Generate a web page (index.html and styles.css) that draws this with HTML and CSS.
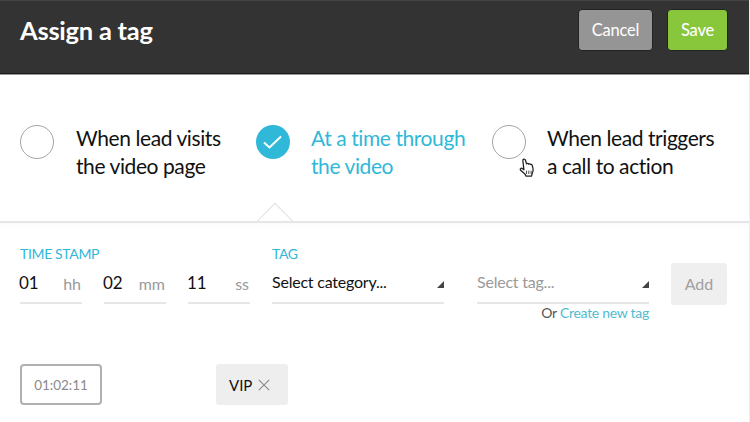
FILE: index.html
```html
<!DOCTYPE html>
<html lang="en">
<head>
<meta charset="utf-8">
<title>Assign a tag</title>
<link rel="stylesheet" href="styles.css">
</head>
<body>
<header class="top">
  <h1 class="title">Assign a tag</h1>
  <div class="actions">
    <button class="btn cancel">Cancel</button>
    <button class="btn save">Save</button>
  </div>
</header>
<section class="options">
  <div class="opt opt1">
    <span class="radio"></span>
    <span class="opt-text">When lead visits<br>the video page</span>
  </div>
  <div class="opt opt2 active">
    <svg class="check" width="34" height="34" viewBox="0 0 34 34"><circle cx="17" cy="17" r="17" fill="#30b8d8"/><path d="M8 17.5l5.500 5L25 11.500" fill="none" stroke="#fff" stroke-width="2"/></svg>
    <span class="opt-text">At a time through<br>the video</span>
  </div>
  <div class="opt opt3">
    <span class="radio"></span>
    <span class="opt-text">When lead triggers<br>a call to action</span>
    <svg class="cursor" width="18" height="20" viewBox="0 0 18 22"><path d="M5 1.500c1-.7 2 0 2.300 1l1.200 4 .6-.4c.8-.4 1.500 0 1.800.6.600-.5 1.500-.3 1.900.4.700-.4 1.500-.1 1.800.6l1 3.800c.4 1.800.1 3.500-.8 5l-.8 3.400H8l-1.300-2.400L2 13.500c-.6-.8-.5-1.600.1-2 .7-.5 1.500-.3 2.200.3l1.300 1.200L4.500 3.400c-.2-.8 0-1.500.5-1.900z" fill="#fff" stroke="#222" stroke-width="1.400" stroke-linejoin="round"/><path d="M8.500 14v3.500M11 14v3.500M13.500 14v3.500" stroke="#333" stroke-width="1"/></svg>
  </div>
</section>
<div class="divider"><span class="notch"></span></div>
<section class="form">
  <div class="col-time">
    <div class="label">TIME STAMP</div>
    <div class="time-fields">
      <div class="tf"><span class="val">01</span><span class="unit">hh</span></div>
      <div class="tf"><span class="val">02</span><span class="unit">mm</span></div>
      <div class="tf"><span class="val">11</span><span class="unit">ss</span></div>
    </div>
  </div>
  <div class="col-cat">
    <div class="label">TAG</div>
    <div class="select"><span class="sel-text">Select category...</span><span class="arrow"></span></div>
  </div>
  <div class="col-tag">
    <div class="select"><span class="sel-text muted">Select tag...</span><span class="arrow"></span></div>
    <div class="create">Or <a class="link">Create new tag</a></div>
  </div>
  <button class="add">Add</button>
</section>
<section class="results">
  <div class="stamp">01:02:11</div>
  <div class="chip"><span>VIP</span><svg width="12" height="12" viewBox="0 0 12 12"><path d="M.8.8l10.400 10.400M11.200.8L.8 11.200" stroke="#8a8a8a" stroke-width="1.100" fill="none"/></svg></div>
</section>
</body>
</html>
```
FILE: styles.css
```css
* { box-sizing: border-box; }
html, body { margin: 0; padding: 0; }
body {
  width: 750px;
  height: 422px;
  overflow: hidden;
  background: #fff;
  font-family: Lato, "Open Sans", sans-serif;
  color: #111;
  border-right: 1px solid #eeeeee;
}
.top {
  height: 75px;
  background: #333333;
  border-top: 1px solid #444;
  border-bottom: 1px solid #9a9a9a;
  box-shadow: inset 0 -1px 0 #1c1c1c;
  display: flex;
  justify-content: space-between;
  padding: 8px 21px 0 20px;
}
.title {
  margin: 0;
  color: #fff;
  font-size: 25.500px;
  font-weight: 700;
  line-height: 42px;
  letter-spacing: -.25px;
}
.actions { display: flex; gap: 14px; align-items: flex-start; }
.btn {
  height: 42px;
  border: 1px solid #222;
  outline: 0;
  border-radius: 4px;
  color: #fff;
  font: 400 16.500px Lato, sans-serif;
  letter-spacing: -.2px;
  padding: 0;
}
.cancel { width: 75px; background: #959595; }
.save { width: 61px; background: #88c63c; font-weight: 500; }
.options {
  height: 146px;
  display: flex;
  padding-top: 50px;
}
.opt { display: flex; flex: none; align-items: flex-start; position: relative; }
.opt1 { width: 256px; padding-left: 20px; gap: 22px; }
.opt2 { width: 236px; gap: 21px; }
.opt3 { gap: 21px; }
.radio {
  flex: none;
  width: 34px;
  height: 34px;
  border: 1.500px solid #a3a3a3;
  border-radius: 50%;
}
.check { flex: none; }
.opt-text {
  font-size: 21px;
  line-height: 28px;
  letter-spacing: -.42px;
  margin-top: -1px;
}
.active .opt-text { color: #30b8d8; }
.cursor { position: absolute; left: 26px; top: 33px; }
.divider {
  height: 2px;
  background: #e4e6e8;
  position: relative;
}
.notch {
  position: absolute;
  left: 261.500px;
  top: -13px;
  width: 26px;
  height: 26px;
  background: #fff;
  border-left: 1px solid #d4d8db;
  border-top: 1px solid #d4d8db;
  transform: rotate(45deg);
  clip-path: polygon(0 0, 100% 0, 0 100%);
}
.form {
  display: flex;
  align-items: flex-start;
  padding: 23px 21px 0 20px;
  background: linear-gradient(#fafbfc, #fff 6px);
}
.label {
  color: #30b8d8;
  font-size: 14px;
  line-height: 16px;
  letter-spacing: -.35px;
}
.col-time { width: 252px; }
.time-fields { display: flex; gap: 22px; margin-top: 4px; }
.tf {
  width: 62px;
  height: 38px;
  display: flex;
  justify-content: space-between;
  align-items: center;
  border-bottom: 2px solid #e6e6e6;
  padding-right: 1px;
  padding-bottom: 5px;
}
.val { font-size: 17px; padding-top: 2px; margin-left: -1px; }
.unit { font-size: 16px; color: #9a9a9a; padding-top: 3px; }
.col-cat { width: 172px; margin-right: 33px; }
.col-cat .select { margin-top: 4px; }
.col-tag { width: 172px; margin-right: 22px; }
.col-tag .select { margin-top: 20px; }
.select {
  height: 38px;
  display: flex;
  justify-content: space-between;
  align-items: center;
  border-bottom: 2px solid #e6e6e6;
  padding-bottom: 4px;
}
.sel-text { font-size: 16px; line-height: 20px; letter-spacing: -.22px; }
.muted { color: #9a9a9a; }
.arrow {
  width: 0;
  height: 0;
  margin-top: 4px;
  border-left: 7px solid transparent;
  border-bottom: 7px solid #444;
}
.create {
  text-align: right;
  font-size: 14px;
  line-height: 20px;
  color: #555;
  margin-top: -1px;
  letter-spacing: -.28px;
}
.link { color: #4fbccf; }
.add {
  width: 56px;
  height: 42px;
  margin-top: 17px;
  background: #efefef;
  border: 0;
  border-radius: 3px;
  color: #a0a0a0;
  font: 400 16px Lato, sans-serif;
  padding: 0 0 2px;
}
.results {
  display: flex;
  margin: 41px 0 0 20px;
  gap: 114px;
}
.stamp {
  width: 82px;
  height: 41px;
  border: 2px solid #b0b0b0;
  border-radius: 4px;
  color: #8a8a8a;
  font-size: 13.500px;
  display: flex;
  align-items: center;
  justify-content: center;
}
.chip {
  width: 72px;
  height: 41px;
  background: #eeeeee;
  border-radius: 3px;
  display: flex;
  align-items: center;
  padding-left: 13px;
  gap: 6px;
  font-size: 15px;
}
```
